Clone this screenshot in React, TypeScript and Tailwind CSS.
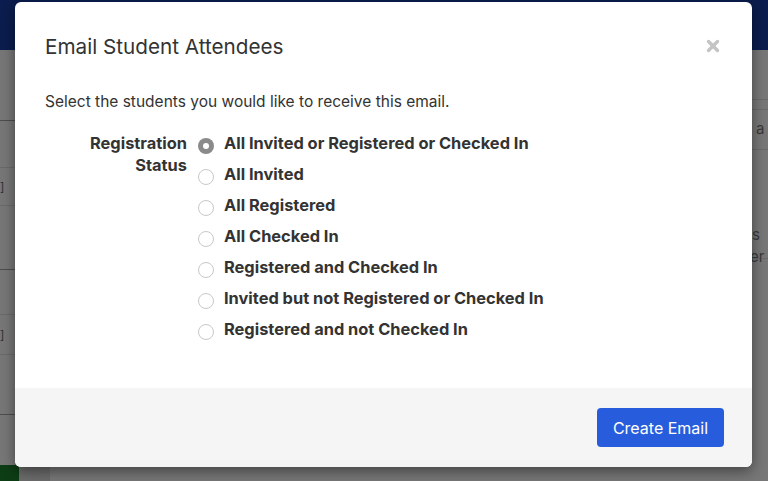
import { X } from 'lucide-react';

const options = [
  'All Invited or Registered or Checked In',
  'All Invited',
  'All Registered',
  'All Checked In',
  'Registered and Checked In',
  'Invited but not Registered or Checked In',
  'Registered and not Checked In',
];

const Radio: React.FC<{ checked?: boolean }> = ({ checked }) =>
  checked ? (
    <span className="flex h-4 w-4 shrink-0 items-center justify-center rounded-full bg-[#8a8a8a]">
      <span className="block h-1.5 w-1.5 rounded-full bg-white" />
    </span>
  ) : (
    <span className="block h-4 w-4 shrink-0 rounded-full border border-[#c8c8c8] bg-white" />
  );

export default function App() {
  return (
    <div className="relative h-[481px] w-[768px] overflow-hidden bg-[#777777] font-['Inter',sans-serif]">
      {/* page behind the overlay */}
      <div className="h-[50px] bg-[#0b1d4e]" />
      <div className="flex">
        <div className="w-[15px] text-[#333]">
          <div className="h-[71px] border-b border-[#4d4d4d]" />
          <div className="h-[47px] border-b border-[#6a6a6a]" />
          <div className="flex h-[38px] items-center border-b border-[#6a6a6a] text-[12px]">]</div>
          <div className="h-[64px] border-b border-[#4d4d4d]" />
          <div className="h-[45px] border-b border-[#6a6a6a]" />
          <div className="flex h-[40px] items-center border-b border-[#6a6a6a] text-[12px]">]</div>
          <div className="h-[60px] border-b border-[#4d4d4d]" />
        </div>
        <div className="flex-1" />
        <div className="w-[16px] text-[15px] text-[#3a3a3a]">
          <div className="h-[50px] border-b border-[#6a6a6a]" />
          <div className="h-[10px] border-b border-[#6a6a6a]" />
          <div className="flex h-[40px] items-center border-b border-[#6a6a6a] pl-[4px]">a</div>
          <div className="h-[108px] pt-[8px] leading-[22px]">
            <div className="mt-[66px]">s</div>
            <div className="-ml-[2px]">er</div>
          </div>
          <div className="h-px bg-[#6a6a6a]" />
        </div>
      </div>
      <div className="absolute bottom-0 left-0 flex h-[16px] w-[50px]">
        <div className="w-[19px] bg-[#0d3d15]" />
        <div className="flex-1 bg-[#6c6c6c]" />
      </div>

      {/* modal */}
      <div className="absolute left-[15px] top-[2px] flex h-[465px] w-[737px] flex-col overflow-hidden rounded-[6px] bg-white shadow-[0_4px_14px_rgba(0,0,0,0.45)]">
        <div className="flex items-center justify-between px-[30px] pt-[31px]">
          <h2 className="text-[20.7px] leading-[28px] text-[#333]">Email Student Attendees</h2>
          <X className="-mt-[2px] h-[18px] w-[18px] text-[#c4c4c4]" strokeWidth={4.5} />
        </div>
        <div className="flex-1 px-[30px] pt-[30px]">
          <p className="text-[15.5px] leading-[22px] text-[#333]">Select the students you would like to receive this email.</p>
          <div className="mt-[19px] flex gap-[11px]">
            <div className="w-[142px] text-right text-[16.4px] font-bold leading-[22px] text-[#333]">
              Registration
              <br />
              Status
            </div>
            <div className="flex flex-col gap-[9px]">
              {options.map((o, i) => (
                <label key={o} className="flex h-[22px] items-center gap-[10px] text-[16.4px] font-bold text-[#333]">
                  <span className="mt-[5px]"><Radio checked={i === 0} /></span>
                  {o}
                </label>
              ))}
            </div>
          </div>
        </div>
        <div className="flex h-[79px] items-center justify-end bg-[#f5f5f5] px-[28px]">
          <button className="h-[39px] w-[127px] rounded-[4px] bg-[#275ddc] text-[16px] text-white">Create Email</button>
        </div>
      </div>
    </div>
  );
}
